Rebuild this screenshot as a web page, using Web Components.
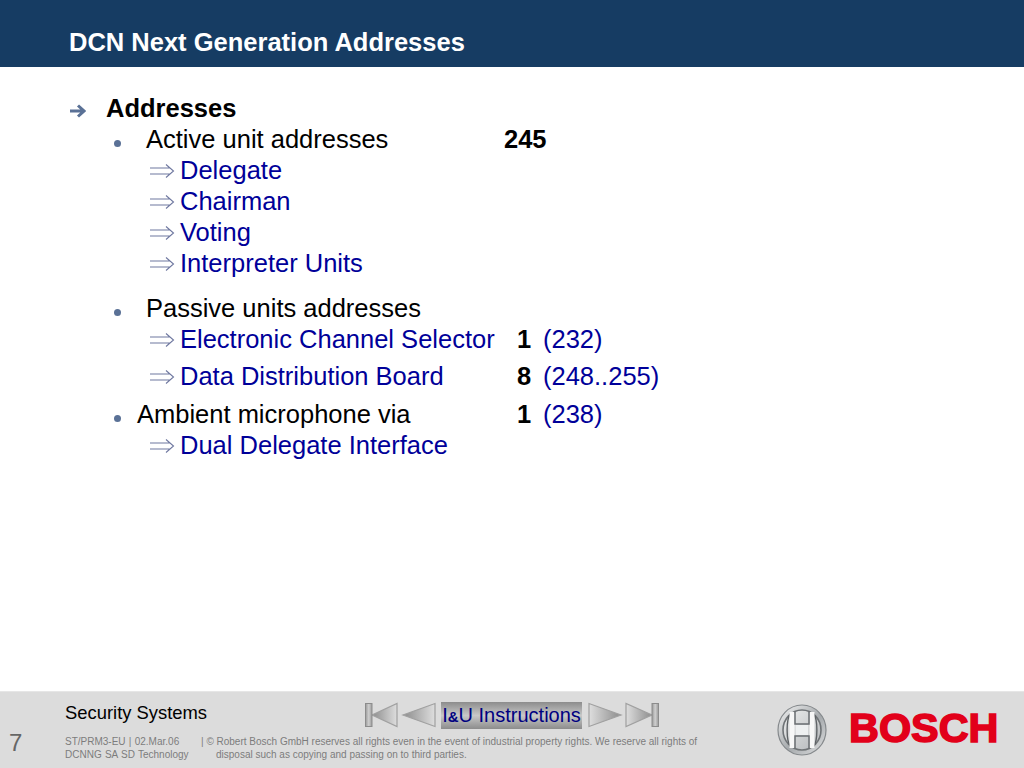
<!DOCTYPE html>
<html>
<head>
<meta charset="utf-8">
<title>DCN Next Generation Addresses</title>
<style>
html, body { margin: 0; padding: 0; background: #fff; }
body { font-family: "Liberation Sans", Arial, sans-serif; width: 1024px; height: 768px; overflow: hidden; }
</style>
</head>
<body>
<slide-page>
	<span slot="title">DCN Next Generation Addresses</span>
	<addr-row kind="head">Addresses</addr-row>
	<addr-row kind="bullet" value="245">Active unit addresses</addr-row>
	<addr-row kind="sub">Delegate</addr-row>
	<addr-row kind="sub">Chairman</addr-row>
	<addr-row kind="sub">Voting</addr-row>
	<addr-row kind="sub" style="--after:14px">Interpreter Units</addr-row>
	<addr-row kind="bullet">Passive units addresses</addr-row>
	<addr-row kind="sub" value="1" note="(232)" style="--after:6px">Electronic Channel Selector</addr-row>
	<addr-row kind="sub" value="8" note="(248..255)" style="--after:7px">Data Distribution Board</addr-row>
	<addr-row kind="bullet" tight value="1" note="(238)">Ambient microphone via</addr-row>
	<addr-row kind="sub">Dual Delegate Interface</addr-row>
	<slide-footer slot="footer" page="7"></slide-footer>
</slide-page>

<script>
const RIGHT_ARROW = `<svg width="25" height="14" viewBox="0 0 25 14"><path d="M0 4H20M0 10H20M16 .5L23.5 7L16 13.5" fill="none" stroke="#6f78a0" stroke-width="1.1"/></svg>`;

class SlidePage extends HTMLElement {
	constructor() {
		super();
		this.attachShadow({mode:"open"}).innerHTML = `
<style>
:host { display: flex; flex-direction: column; width: 1024px; height: 768px; }
header {
	height: 67px; box-sizing: border-box; background: #163c63; color: #fff;
	font: bold 25.5px/1 "Liberation Sans", Arial, sans-serif;
	padding: 30px 0 0 69px; flex: none;
}
main { flex: 1; padding-top: 26px; box-sizing: border-box; min-height: 0; }
</style>
<header><slot name="title"></slot></header>
<main><slot></slot></main>
<slot name="footer"></slot>`;
	}
}

class AddrRow extends HTMLElement {
	connectedCallback() {
		let kind = this.getAttribute("kind");
		let value = this.getAttribute("value") || "";
		let note = this.getAttribute("note") || "";
		let marker = "";
		if (kind == "head") {
			marker = `<svg width="16" height="14" viewBox="0 0 16 14"><path d="M0 7H13M8 1.5L14 7L8 12.5" fill="none" stroke="#5a7196" stroke-width="3"/></svg>`;
		} else if (kind == "bullet") {
			marker = `<i class="dot"></i>`;
		} else {
			marker = RIGHT_ARROW;
		}
		this.attachShadow({mode:"open"}).innerHTML = `
<style>
:host {
	display: grid; height: 31px; margin-bottom: var(--after, 0);
	grid-template-columns: var(--mark) var(--label) 26px auto;
	align-items: center; font: 25.5px/31px "Liberation Sans", Arial, sans-serif; color: #000;
	--mark: 146px; --label: 358px;
}
:host([kind=head]) { --mark: 106px; font-weight: bold; }
:host([kind=sub]) { --mark: 180px; --label: 337px; color: #000099; }
:host([tight]) { --mark: 137px; --label: 380px; }
.mark { display: flex; align-items: center; padding-left: var(--mark-x); }
:host([kind=head]) .mark { --mark-x: 70px; }
:host([kind=head]) svg { margin-top: 4px; }
:host([kind=bullet]) .mark { --mark-x: 114px; }
:host([kind=sub]) .mark { --mark-x: 150px; }
.dot { width: 7px; height: 7px; border-radius: 50%; background: #5a7196; margin-top: 8px; }
.val { font-weight: bold; color: #000; white-space: nowrap; }
.note { color: #000099; white-space: nowrap; }
.label { white-space: nowrap; }
</style>
<span class="mark">${marker}</span>
<span class="label"><slot></slot></span>
<span class="val">${value}</span>
<span class="note">${note}</span>`;
	}
}

class NavArrow extends HTMLElement {
	connectedCallback() {
		let dir = this.getAttribute("dir-to");
		let end = this.hasAttribute("end");
		let id = "g" + dir + (end ? "e" : "");
		let grad = `<linearGradient id="${id}" x1="${dir == "left" ? 1 : 0}" y1="0" x2="${dir == "left" ? 0 : 1}" y2="0">
			<stop offset="0" stop-color="#dedede"/><stop offset="1" stop-color="#8c8c8c"/></linearGradient>
			<linearGradient id="${id}b"><stop offset="0" stop-color="#999"/><stop offset=".5" stop-color="#cfcfcf"/><stop offset="1" stop-color="#999"/></linearGradient>`;
		let tri, bar = "";
		if (dir == "left") {
			tri = end ? "M33 1.5V24.5L8 13Z" : "M34 1.5V24.5L2 13Z";
			if (end) bar = `<rect x="1.5" y="1.5" width="6.5" height="23" fill="url(#${id}b)" stroke="#8c8c8c"/>`;
		} else {
			tri = end ? "M1 1.5V24.5L27 13Z" : "M1 1.5V24.5L33 13Z";
			if (end) bar = `<rect x="27" y="1.5" width="6.5" height="23" fill="url(#${id}b)" stroke="#8c8c8c"/>`;
		}
		this.attachShadow({mode:"open"}).innerHTML = `
<style>:host { display: block; width: 35px; height: 26px; } svg { display: block; }</style>
<svg width="35" height="26" viewBox="0 0 35 26"><defs>${grad}</defs>
<path d="${tri}" fill="url(#${id})" stroke="#a0a0a0" stroke-width="1.2"/>${bar}</svg>`;
	}
}

class BoschLogo extends HTMLElement {
	constructor() {
		super();
		this.attachShadow({mode:"open"}).innerHTML = `
<style>
:host { display: flex; align-items: center; gap: 22px; }
svg { display: block; flex: none; }
b {
	font: bold 41.4px/1 "Liberation Sans", Arial, sans-serif; color: #e2001a;
	-webkit-text-stroke: 1.6px #e2001a; display: block; margin-top: -2px;
}
</style>
<svg width="50" height="52" viewBox="0 0 50 52">
	<defs>
		<linearGradient id="ring" x1="0" y1="0" x2="1" y2="1"><stop offset="0" stop-color="#f4f4f4"/><stop offset=".55" stop-color="#a5a9ac"/><stop offset="1" stop-color="#e2e3e4"/></linearGradient>
		<linearGradient id="disc" x1="0" y1="0" x2="1" y2="1"><stop offset="0" stop-color="#eceded"/><stop offset="1" stop-color="#b4b7ba"/></linearGradient>
	</defs>
	<ellipse cx="25" cy="26" rx="24" ry="25" fill="url(#ring)" stroke="#85898c" stroke-width="1.2"/>
	<ellipse cx="25" cy="26" rx="19" ry="20" fill="url(#disc)" stroke="#6f7376" stroke-width="1.6"/>
	<path d="M13.5 9.5C9 15 9 37 13.5 42.5M36.5 9.5C41 15 41 37 36.5 42.5" fill="none" stroke="#5f6366" stroke-width="1.4"/>
	<path d="M15 8V44M35 8V44" stroke="#f7f7f7" stroke-width="5"/>
	<path d="M18 7.5V20H32V7.5M18 44.5V32H32V44.5" fill="none" stroke="#6a6e71" stroke-width="1.5"/>
	<rect x="18.8" y="21" width="12.4" height="10" fill="#eef0f1"/>
</svg>
<b>BOSCH</b>`;
	}
}

class SlideFooter extends HTMLElement {
	connectedCallback() {
		let page = this.getAttribute("page");
		this.attachShadow({mode:"open"}).innerHTML = `
<style>
:host {
	display: grid; height: 77px; flex: none; box-sizing: border-box;
	background: #dcdcdc; border-top: 1px solid #e6e6e6;
	grid-template-columns: 65px 299px 413px auto; grid-template-rows: 44px 32px;
	font-family: "Liberation Sans", Arial, sans-serif;
}
.page { grid-row: 2; font-size: 24px; color: #666; padding-left: 9px; line-height: 26px; margin-top: -6px; }
.unit { grid-column: 2; font-size: 18.4px; color: #000; padding-top: 11px; line-height: 20px; }
.nav { grid-column: 3; grid-row: 1; display: flex; align-items: center; gap: 2px; height: 42px; padding-top: 2px; }
.caption {
	width: 141px; height: 27px; box-sizing: border-box; text-align: center;
	font-size: 20px; line-height: 27px; color: #000080; margin: 0 4px 0 3px;
	background: linear-gradient(#8c8c8c, #c8c8c8 50%, #8c8c8c); white-space: nowrap;
}
.caption b { font-size: 15px; }
.fine { grid-column: 2 / 4; grid-row: 2; display: flex; font-size: 10px; line-height: 12.5px; color: #7c7c7c; white-space: nowrap; }
.meta { width: 136px; flex: none; word-spacing: .5px; }
.fine p { margin: 0; }
.fine .indent { padding-left: 15px; }
bosch-logo { grid-column: 4; grid-row: 1 / 3; align-self: center; }
</style>
<div class="page">${page}</div>
<div class="unit">Security Systems</div>
<div class="nav">
	<nav-arrow dir-to="left" end></nav-arrow>
	<nav-arrow dir-to="left"></nav-arrow>
	<div class="caption">I<b>&amp;</b>U Instructions</div>
	<nav-arrow dir-to="right"></nav-arrow>
	<nav-arrow dir-to="right" end></nav-arrow>
</div>
<div class="fine">
	<div class="meta"><p>ST/PRM3-EU | 02.Mar.06</p><p>DCNNG SA SD Technology</p></div>
	<div><p>| © Robert Bosch GmbH reserves all rights even in the event of industrial property rights. We reserve all rights of</p><p class="indent">disposal such as copying and passing on to third parties.</p></div>
</div>
<bosch-logo></bosch-logo>`;
	}
}

customElements.define("nav-arrow", NavArrow);
customElements.define("bosch-logo", BoschLogo);
customElements.define("slide-footer", SlideFooter);
customElements.define("addr-row", AddrRow);
customElements.define("slide-page", SlidePage);
</script>
</body>
</html>
